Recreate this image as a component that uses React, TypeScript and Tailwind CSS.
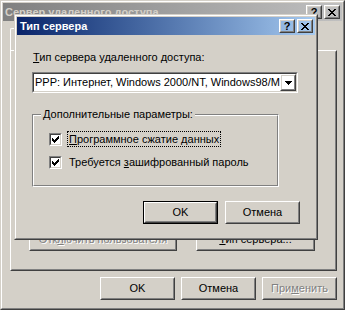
import React from 'react'

type BoxProps = { children?: React.ReactNode; className?: string }

const disabledText = 'text-[#808080] [text-shadow:1px_1px_0_#ffffff]'

// Win2000 raised 3D edge (buttons, caption buttons, combo arrow)
function Raised({ children, className = '' }: BoxProps) {
  return (
    <div className={`border border-t-white border-l-white border-b-[#404040] border-r-[#404040] ${className}`}>
      <div className="flex h-full w-full items-center justify-center border border-t-[#D4D0C8] border-l-[#D4D0C8] border-b-[#808080] border-r-[#808080]">
        {children}
      </div>
    </div>
  )
}

function PushButton({ children, className = '', isDefault = false }: BoxProps & { isDefault?: boolean }) {
  if (isDefault) {
    return (
      <div className={`border border-black ${className}`}>
        <Raised className="h-full w-full">{children}</Raised>
      </div>
    )
  }
  return <Raised className={className}>{children}</Raised>
}

function CloseGlyph() {
  const rows = [[0, 1, 6, 7], [1, 2, 5, 6], [2, 3, 4, 5], [3, 4], [2, 3, 4, 5], [1, 2, 5, 6], [0, 1, 6, 7]]
  return (
    <svg width="8" height="7" viewBox="0 0 8 7" shapeRendering="crispEdges">
      {rows.map((cols, y) => cols.map(x => <rect key={`${x}-${y}`} x={x} y={y} width="1" height="1" fill="#000" />))}
    </svg>
  )
}

function CheckGlyph() {
  const rows = [[6], [5, 6], [0, 4, 5, 6], [0, 1, 3, 4, 5], [0, 1, 2, 3, 4], [1, 2, 3], [2]]
  return (
    <svg width="7" height="7" viewBox="0 0 7 7" shapeRendering="crispEdges">
      {rows.map((cols, y) => cols.map(x => <rect key={`${x}-${y}`} x={x} y={y} width="1" height="1" fill="#000" />))}
    </svg>
  )
}

function ArrowDown() {
  return (
    <svg width="7" height="4" viewBox="0 0 7 4" shapeRendering="crispEdges">
      <rect x="0" y="0" width="7" height="1" fill="#000" />
      <rect x="1" y="1" width="5" height="1" fill="#000" />
      <rect x="2" y="2" width="3" height="1" fill="#000" />
      <rect x="3" y="3" width="1" height="1" fill="#000" />
    </svg>
  )
}

function CaptionButtons() {
  return (
    <div className="flex gap-[2px]">
      <Raised className="h-[14px] w-[16px]">
        <span className="text-[11px] font-bold leading-none text-black">?</span>
      </Raised>
      <Raised className="h-[14px] w-[16px]">
        <CloseGlyph />
      </Raised>
    </div>
  )
}

function CheckBox() {
  return (
    <div className="h-[13px] w-[13px] shrink-0 border border-t-[#808080] border-l-[#808080] border-b-white border-r-white">
      <div className="flex h-full w-full items-center justify-center border border-t-[#404040] border-l-[#404040] border-b-[#D4D0C8] border-r-[#D4D0C8] bg-white">
        <CheckGlyph />
      </div>
    </div>
  )
}

// Window frame: two bevel rings plus one pixel of face colour
function WindowFrame({ children, className = '' }: BoxProps) {
  return (
    <div className={`border border-t-[#D4D0C8] border-l-[#D4D0C8] border-b-[#404040] border-r-[#404040] bg-[#D4D0C8] ${className}`}>
      <div className="flex h-full w-full flex-col border border-t-white border-l-white border-b-[#808080] border-r-[#808080] p-px">
        {children}
      </div>
    </div>
  )
}

function ServerTypeDialog() {
  return (
    <WindowFrame className="absolute left-[14px] top-[14px] h-[226px] w-[304px]">
      <div className="flex h-[18px] shrink-0 items-center justify-between bg-linear-to-r from-[#0A246A] to-[#A6CAF0] pl-[3px] pr-[2px]">
        <span className="text-[11px] font-bold text-white">Тип сервера</span>
        <CaptionButtons />
      </div>

      <div className="flex flex-1 flex-col pl-[15px] pr-[15px] pt-[16px]">
        <div className="pl-px leading-[13px]">
          <span className="underline">Т</span>ип сервера удаленного доступа:
        </div>

        {/* combo box */}
        <div className="mt-[8px] h-[21px] w-[266px] border border-t-[#808080] border-l-[#808080] border-b-white border-r-white">
          <div className="flex h-full border border-t-[#404040] border-l-[#404040] border-b-[#D4D0C8] border-r-[#D4D0C8] bg-white">
            <div className="flex-1 overflow-hidden whitespace-nowrap pl-px leading-[17px]">
              PPP: Интернет, Windows 2000/NT, Windows98/ME
            </div>
            <Raised className="h-full w-[16px] shrink-0">
              <ArrowDown />
            </Raised>
          </div>
        </div>

        {/* group box */}
        <div className="relative mt-[21px] h-[73px] w-[247px] border border-t-[#808080] border-l-[#808080] border-b-white border-r-white">
          <div className="flex h-full flex-col gap-[7px] border border-t-white border-l-white border-b-[#808080] border-r-[#808080] pl-[15px] pt-[15px]">
            <div className="flex items-center gap-[5px]">
              <CheckBox />
              <span className="border border-dotted border-black px-px leading-[14px]">
                <span className="underline">П</span>рограммное сжатие данных
              </span>
            </div>
            <div className="flex items-center gap-[5px]">
              <CheckBox />
              <span className="border border-transparent px-px leading-[14px]">
                Требуется <span className="underline">з</span>ашифрованный пароль
              </span>
            </div>
          </div>
          <span className="absolute left-[8px] top-[-7px] bg-[#D4D0C8] px-[2px] leading-[13px]">
            Дополнительные параметры:
          </span>
        </div>

        <div className="mt-[14px] flex justify-end gap-[7px]">
          <PushButton isDefault className="h-[23px] w-[75px]">OK</PushButton>
          <PushButton className="h-[23px] w-[75px]">Отмена</PushButton>
        </div>
      </div>
    </WindowFrame>
  )
}

export default function App() {
  return (
    <div className="relative h-[310px] w-[345px] overflow-hidden bg-[#D4D0C8] font-['Liberation_Sans',Arial,sans-serif] text-[11px] text-black">
      {/* background: remote access server properties */}
      <WindowFrame className="h-full w-full">
        <div className="flex h-[18px] shrink-0 items-center justify-between bg-linear-to-r from-[#808080] to-[#C0C0C0] pl-[2px] pr-[2px]">
          <span className="text-[11px] font-bold text-[#D4D0C8]">Сервер удаленного доступа</span>
          <CaptionButtons />
        </div>

        <div className="flex flex-1 flex-col pl-[7px] pt-[7px]">
          <div className="flex h-[22px]">
            <div className="flex h-full w-[52px] items-center justify-center rounded-tl-[2px] border-l border-t border-r border-l-white border-t-white border-r-[#404040]">
              Общие
            </div>
          </div>

          <div className="flex h-[221px] w-[327px] flex-col justify-end border border-t-white border-l-white border-b-[#404040] border-r-[#404040]">
            <div className="flex h-full flex-col justify-end border border-t-[#D4D0C8] border-l-[#D4D0C8] border-b-[#808080] border-r-[#808080] pb-[18px] pl-[17px]">
              <div className="flex gap-[19px]">
                <PushButton className="h-[23px] w-[148px]">
                  <span className={disabledText}>
                    Отк<span className="underline">л</span>ючить пользователя
                  </span>
                </PushButton>
                <PushButton className="h-[23px] w-[119px]">
                  <span>
                    <span className="underline">Т</span>ип сервера...
                  </span>
                </PushButton>
              </div>
            </div>
          </div>

          <div className="mt-[6px] flex w-[327px] justify-end gap-[6px]">
            <PushButton className="h-[23px] w-[75px]">OK</PushButton>
            <PushButton className="h-[23px] w-[75px]">Отмена</PushButton>
            <PushButton className="h-[23px] w-[75px]">
              <span className={disabledText}>
                При<span className="underline">м</span>енить
              </span>
            </PushButton>
          </div>
        </div>
      </WindowFrame>

      <ServerTypeDialog />
    </div>
  )
}
